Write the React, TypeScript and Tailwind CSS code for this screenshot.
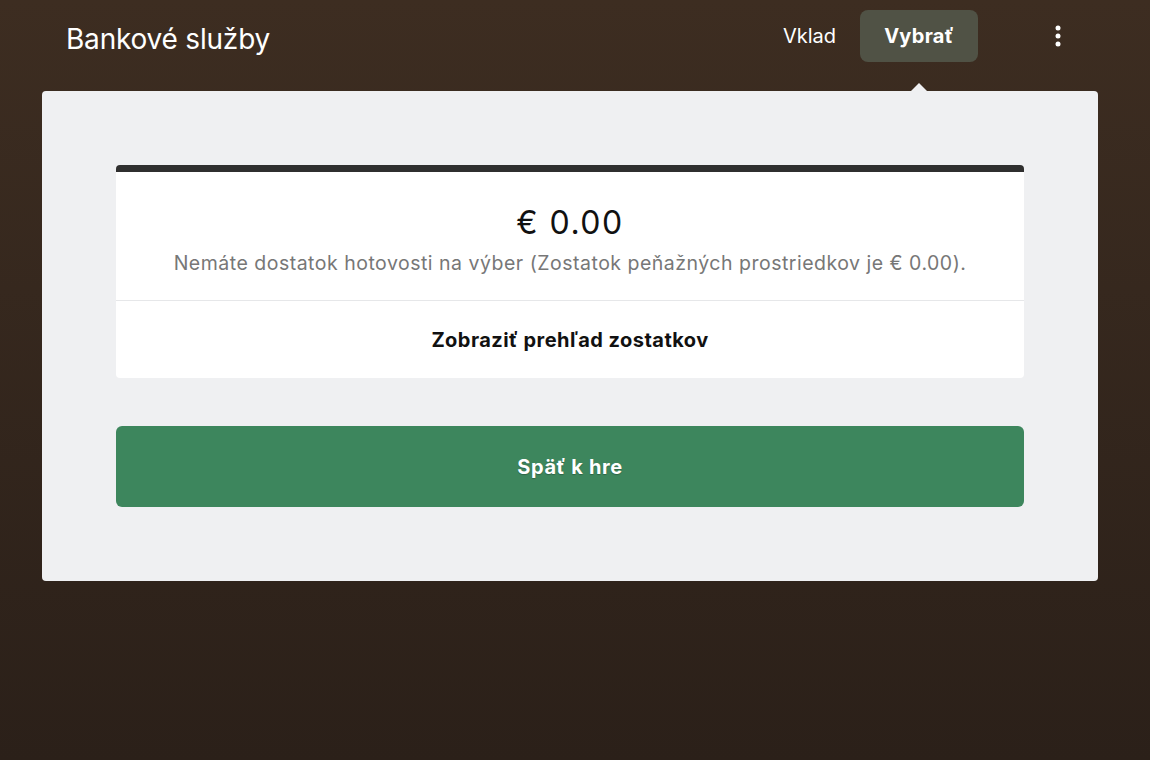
import React from 'react';

const font = { fontFamily: 'Inter, "Noto Sans", "Liberation Sans", sans-serif' };

const App: React.FC = () => {
    return (
        <div
            className="w-[1150px] h-[760px] bg-gradient-to-b from-[#3d2d21] to-[#2b2019] text-white overflow-hidden"
            style={font}
        >
            <header className="flex items-center justify-between pl-[66px] pr-[80px] pt-[10px] h-[62px]">
                <h1 className="text-[28px] leading-none font-normal tracking-[-0.2px] mt-[6px]">Bankové služby</h1>
                <div className="flex items-center">
                    <button className="h-[52px] px-6 text-[20px] rounded-lg">Vklad</button>
                    <button className="h-[52px] w-[118px] text-[20px] font-bold tracking-[0.3px] rounded-lg bg-[#505245]">Vybrať</button>
                    <button className="ml-[68px] w-6 h-6 flex items-center justify-center" aria-label="Menu">
                        <svg width="24" height="24" viewBox="0 0 24 24" fill="#ffffff">
                            <circle cx="12" cy="4" r="2.5" />
                            <circle cx="12" cy="12" r="2.5" />
                            <circle cx="12" cy="20" r="2.5" />
                        </svg>
                    </button>
                </div>
            </header>

            <main className="relative w-[1056px] ml-[42px] mt-[29px] rounded bg-[#eff0f2] p-[74px] text-[#111]">
                {/* arrow pointing to the active tab */}
                <div className="absolute -top-[8px] left-[869px] w-0 h-0 border-l-[8px] border-r-[8px] border-b-[8px] border-l-transparent border-r-transparent border-b-[#eff0f2]" />

                <section className="bg-white rounded border-t-[7px] border-[#2f2f2f]">
                    <div className="h-[128px] flex flex-col items-center justify-center">
                        <div className="text-[32px] leading-none tracking-[1.5px] mt-[14px]">€ 0.00</div>
                        <p className="text-[19.5px] tracking-[0.5px] text-[#777] mt-[10px]">
                            Nemáte dostatok hotovosti na výber (Zostatok peňažných prostriedkov je € 0.00).
                        </p>
                    </div>
                    <div className="h-[78px] border-t border-[#e6e7e9] flex items-center justify-center">
                        <span className="text-[20px] font-bold tracking-[0.45px]">Zobraziť prehľad zostatkov</span>
                    </div>
                </section>

                <button className="mt-[48px] w-full h-[81px] rounded-md bg-[#3d865d] text-white text-[20px] font-bold tracking-[0.6px] [text-shadow:0_1px_1px_rgba(0,0,0,0.25)]">
                    Späť k hre
                </button>
            </main>
        </div>
    );
};

export default App;
